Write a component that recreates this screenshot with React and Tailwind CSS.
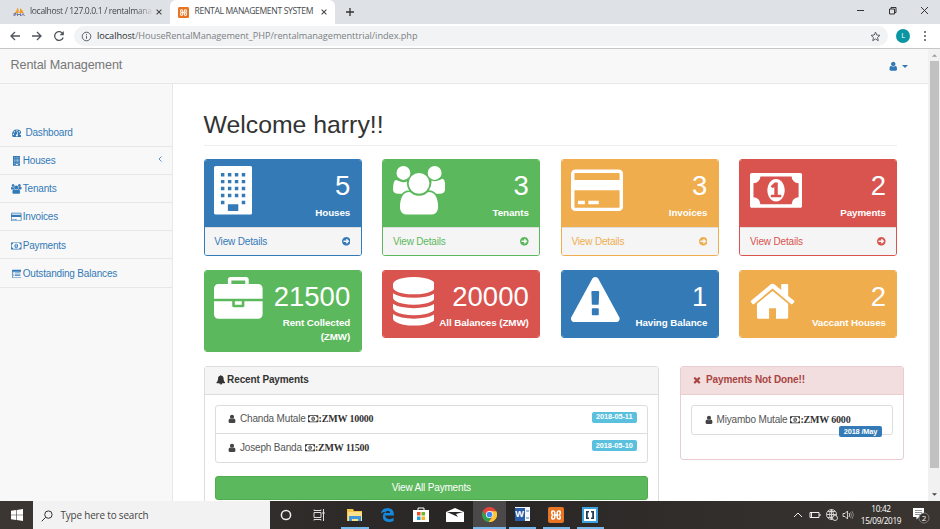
import React from 'react';

const ICONS = {
  user: ['0 0 1792 1792', 'M1536 1399q0 109-62.5 187t-150.5 78h-854q-88 0-150.5-78t-62.5-187q0-85 8.5-160.5t31.5-152 58.5-131 94-89 134.5-34.5q131 128 313 128t313-128q76 0 134.5 34.5t94 89 58.5 131 31.5 152 8.5 160.5zm-256-887q0 159-112.5 271.5t-271.5 112.5-271.5-112.5-112.5-271.5 112.5-271.5 271.5-112.5 271.5 112.5 112.5 271.5z'],
  users: ['-64 0 1920 1792', 'M529 896q-162 5-265 128h-134q-82 0-138-40.5t-56-118.5q0-353 124-353 6 0 43.5 21t97.5 42.5 119 21.5q67 0 133-23-5 37-5 66 0 159 93 294zm1071 637q0 120-73 189.5t-194 69.5h-874q-121 0-194-69.5t-73-189.5q0-53 3.5-103.5t14-109 26.5-108.5 43-97.5 62-81 85.5-53.5 111.5-20q10 0 43 21.5t73 48 107 48 135 21.5 135-21.5 107-48 73-48 43-21.5q61 0 111.5 20t85.5 53.5 62 81 43 97.5 26.5 108.5 14 109 3.5 103.5zm-1024-1277q0 106-75 181t-181 75-181-75-75-181 75-181 181-75 181 75 75 181zm704 384q0 159-112.5 271.5t-271.5 112.5-271.5-112.5-112.5-271.5 112.5-271.5 271.5-112.5 271.5 112.5 112.5 271.5zm576 225q0 78-56 118.5t-138 40.5h-134q-103-123-265-128 93-135 93-294 0-29-5-66 66 23 133 23 59 0 119-21.5t97.5-42.5 43.5-21q124 0 124 353zm-128-609q0 106-75 181t-181 75-181-75-75-181 75-181 181-75 181 75 75 181z'],
  home: ['64 0 1664 1792', 'M1472 992v480q0 26-19 45t-45 19h-384v-384h-256v384h-384q-26 0-45-19t-19-45v-480q0-1 .5-3t.5-3l575-474 575 474q1 2 1 6zm223-69l-62 74q-8 9-21 11h-3q-13 0-21-7l-692-577-692 577q-12 8-24 7-13-2-21-11l-62-74q-8-10-7-23.5t11-21.5l719-599q32-26 76-26t76 26l244 204v-195q0-14 9-23t23-9h192q14 0 23 9t9 23v408l219 182q10 8 11 21.5t-7 23.5z'],
  warning: ['0 0 1792 1792', 'M1024 1375v-190q0-14-9.5-23.5t-22.5-9.5h-192q-13 0-22.5 9.5t-9.5 23.5v190q0 14 9.5 23.5t22.5 9.5h192q13 0 22.5-9.5t9.5-23.5zm-2-374l18-459q0-12-10-19-13-11-24-11h-220q-11 0-24 11-10 7-10 21l17 457q0 10 10 16.5t24 6.5h185q14 0 23.5-6.5t10.5-16.5zm-14-934l768 1408q35 63-2 126-17 29-46.5 46t-63.5 17h-1536q-34 0-63.5-17t-46.5-46q-37-63-2-126l768-1408q17-31 47-49t65-18 65 18 47 49z'],
  briefcase: ['0 0 1792 1792', 'M640 256h512v-128h-512v128zm1152 640v480q0 66-47 113t-113 47h-1472q-66 0-113-47t-47-113v-480h672v160q0 26 19 45t45 19h320q26 0 45-19t19-45v-160h672zm-768 0v128h-256v-128h256zm768-480v384h-1792v-384q0-66 47-113t113-47h352v-160q0-40 28-68t68-28h576q40 0 68 28t28 68v160h352q66 0 113 47t47 113z'],
  database: ['128 0 1536 1792', 'M896 768q237 0 443-43t325-127v170q0 69-103 128t-280 93.5-385 34.5-385-34.5-280-93.5-103-128v-170q119 84 325 127t443 43zm0 768q237 0 443-43t325-127v170q0 69-103 128t-280 93.5-385 34.5-385-34.5-280-93.5-103-128v-170q119 84 325 127t443 43zm0-384q237 0 443-43t325-127v170q0 69-103 128t-280 93.5-385 34.5-385-34.5-280-93.5-103-128v-170q119 84 325 127t443 43zm0-1152q208 0 385 34.5t280 93.5 103 128v128q0 69-103 128t-280 93.5-385 34.5-385-34.5-280-93.5-103-128v-128q0-69 103-128t280-93.5 385-34.5z'],
  money: ['0 0 1920 1792', 'M768 1152h384v-96h-128v-448h-114l-148 137 77 80q42-37 55-57h2v288h-128v96zm512-256q0 70-21 142t-59.5 134-101.5 101-138 39-138-39-101.5-101-59.5-134-21-142 21-142 59.5-134 101.5-101 138-39 138 39 101.5 101 59.5 134 21 142zm512 256v-512q-106 0-181-75t-75-181h-1152q0 106-75 181t-181 75v512q106 0 181 75t75 181h1152q0-106 75-181t181-75zm128-832v1152q0 26-19 45t-45 19h-1792q-26 0-45-19t-19-45v-1152q0-26 19-45t45-19h1792q26 0 45 19t19 45z'],
  card: ['0 0 1920 1792', 'M1760 128q66 0 113 47t47 113v1216q0 66-47 113t-113 47h-1600q-66 0-113-47t-47-113v-1216q0-66 47-113t113-47h1600zm-1600 128q-13 0-22.5 9.5t-9.5 22.5v224h1664v-224q0-13-9.5-22.5t-22.5-9.5h-1600zm1600 1280q13 0 22.5-9.5t9.5-22.5v-608h-1664v608q0 13 9.5 22.5t22.5 9.5h1600zm-1504-128v-128h256v128h-256zm384 0v-128h384v128h-384z'],
  building: ['0 0 1408 1792', 'M64 0h1280q26 0 45 19t19 45v1664q0 26-19 45t-45 19h-1280q-26 0-45-19t-19-45v-1664q0-26 19-45t45-19zM256 256v128h128v-128zM512 256v128h128v-128zM768 256v128h128v-128zM1024 256v128h128v-128zM256 512v128h128v-128zM512 512v128h128v-128zM768 512v128h128v-128zM1024 512v128h128v-128zM256 768v128h128v-128zM512 768v128h128v-128zM768 768v128h128v-128zM1024 768v128h128v-128zM256 1024v128h128v-128zM512 1024v128h128v-128zM768 1024v128h128v-128zM1024 1024v128h128v-128zM256 1280v128h128v-128zM1024 1280v128h128v-128zM512 1408v256h384v-256z'],
  dashboard: ['0 0 1792 1792', 'M384 1152q0-53-37.5-90.5t-90.5-37.5-90.5 37.5-37.5 90.5 37.5 90.5 90.5 37.5 90.5-37.5 37.5-90.5zm192-448q0-53-37.5-90.5t-90.5-37.5-90.5 37.5-37.5 90.5 37.5 90.5 90.5 37.5 90.5-37.5 37.5-90.5zm428 481l101-382q6-26-7.5-48.5t-38.5-29.5-48 6.5-30 39.5l-101 382q-60 5-107 43.5t-63 98.5q-20 77 20 146t117 89 146-20 89-117q16-60-6-117t-72-91zm660-33q0-53-37.5-90.5t-90.5-37.5-90.5 37.5-37.5 90.5 37.5 90.5 90.5 37.5 90.5-37.5 37.5-90.5zm-640-640q0-53-37.5-90.5t-90.5-37.5-90.5 37.5-37.5 90.5 37.5 90.5 90.5 37.5 90.5-37.5 37.5-90.5zm448 192q0-53-37.5-90.5t-90.5-37.5-90.5 37.5-37.5 90.5 37.5 90.5 90.5 37.5 90.5-37.5 37.5-90.5zm320 448q0 261-141 483-19 29-54 29h-1402q-35 0-54-29-141-221-141-483 0-182 71-348t191-286 286-191 348-71 348 71 286 191 191 286 71 348z'],
  listAlt: ['0 0 1792 1792', 'M160 128h1472q66 0 113 47t47 113v1216q0 66-47 113t-113 47h-1472q-66 0-113-47t-47-113v-1216q0-66 47-113t113-47zM128 512v992q0 32 32 32h1472q32 0 32-32v-992zM256 640h128v128h-128zM512 640h1024v128h-1024zM256 896h128v128h-128zM512 896h1024v128h-1024zM256 1152h128v128h-128zM512 1152h1024v128h-1024z'],
  bell: ['0 0 1792 1792', 'M912 1696q0-16-16-16-59 0-101.5-42.5t-42.5-101.5q0-16-16-16t-16 16q0 73 51.5 124.5t124.5 51.5q16 0 16-16zm816-288q0 52-38 90t-90 38h-448q0 106-75 181t-181 75-181-75-75-181h-448q-52 0-90-38t-38-90q50-42 91-88t85-119.5 74.5-158.5 50-206 19.5-260q0-152 117-282.5t307-158.5q-8-19-8-39 0-40 28-68t68-28 68 28 28 68q0 20-8 39 190 28 307 158.5t117 282.5q0 139 19.5 260t50 206 74.5 158.5 85 119.5 91 88z'],
  times: ['0 0 1792 1792', 'M1490 1322q0 40-28 68l-136 136q-28 28-68 28t-68-28l-294-294-294 294q-28 28-68 28t-68-28l-136-136q-28-28-28-68t28-68l294-294-294-294q-28-28-28-68t28-68l136-136q28-28 68-28t68 28l294 294 294-294q28-28 68-28t68 28l136 136q28 28 28 68t-28 68l-294 294 294 294q28 28 28 68z'],
  arrow: ['128 128 1536 1536', 'M1413 896q0-27-18-45l-362-362q-18-18-45-18t-45 18l-91 91q-18 18-18 45t18 45l98 98h-502q-26 0-45 19t-19 45v128q0 26 19 45t45 19h502l-98 98q-19 19-19 45t19 45l91 91q18 18 45 18t45-18l362-362q18-18 18-45zm251 0q0 209-103 385.5t-279.5 279.5-385.5 103-385.5-103-279.5-279.5-103-385.5 103-385.5 279.5-279.5 385.5-103 385.5 103 279.5 279.5 103 385.5z'],
};

const NONZERO = ['users', 'home', 'database'];

function Icon({ name, className }) {
  const [viewBox, d] = ICONS[name];
  return (
    <svg viewBox={viewBox} fill="currentColor" className={`shrink-0 ${className}`}>
      <path d={d} fillRule={NONZERO.includes(name) ? 'nonzero' : 'evenodd'} />
    </svg>
  );
}

const MENU = [
  ['dashboard', 'Dashboard'],
  ['building', 'Houses'],
  ['users', 'Tenants'],
  ['card', 'Invoices'],
  ['money', 'Payments'],
  ['listAlt', 'Outstanding Balances'],
];

const BLUE = { bg: 'bg-[#337ab7]', border: 'border-[#337ab7]', text: 'text-[#337ab7]' };
const GREEN = { bg: 'bg-[#5cb85c]', border: 'border-[#5cb85c]', text: 'text-[#5cb85c]' };
const YELLOW = { bg: 'bg-[#f0ad4e]', border: 'border-[#f0ad4e]', text: 'text-[#f0ad4e]' };
const RED = { bg: 'bg-[#d9534f]', border: 'border-[#d9534f]', text: 'text-[#d9534f]' };

const TOP_CARDS = [
  ['building', 5, 'Houses', BLUE],
  ['users', 3, 'Tenants', GREEN],
  ['card', 3, 'Invoices', YELLOW],
  ['money', 2, 'Payments', RED],
];
const BOTTOM_CARDS = [
  ['briefcase', 21500, 'Rent Collected (ZMW)', GREEN],
  ['database', 20000, 'All Balances (ZMW)', RED],
  ['warning', 1, 'Having Balance', BLUE],
  ['home', 2, 'Vaccant Houses', YELLOW],
];

function Card({ icon, value, label, color, footer }) {
  return (
    <div className={`overflow-hidden rounded-[3px] border ${color.border}`}>
      <div className={`flex justify-between pr-[10.5px] pl-[9.5px] pt-[6.4px] pb-[7.5px] text-white ${color.bg}`}>
        <Icon name={icon} className="h-[48.6px] w-auto" />
        <div className={`text-right ${icon === 'briefcase' ? 'w-[82px]' : '-ml-2'}`}>
          <div className="text-[27.5px] leading-[39.3px]">{value}</div>
          <div className={`text-[9.8px] font-bold tracking-[-0.08px] leading-[13.75px] ${icon === 'briefcase' ? '' : 'whitespace-nowrap'}`}>{label}</div>
        </div>
      </div>
      {footer && (
        <div className={`flex h-[28.3px] items-center justify-between border-t border-[#ddd] bg-[#f5f5f5] pr-[10.5px] pl-[9.8px] text-[10px] tracking-[-0.17px] ${color.text}`}>
          <span>View Details</span>
          <Icon name="arrow" className="size-[8.6px]" />
        </div>
      )}
    </div>
  );
}

function Person({ name, amount, children }) {
  return (
    <div className="flex h-full items-center pl-[10px] text-[#555]">
      <Icon name="user" className="mr-[3px] ml-[1.5px] h-[9.6px] w-[10px] text-[#444]" />
      <span className="whitespace-nowrap">{name}</span>
      <Icon name="money" className="ml-[2.7px] h-[9.6px] w-[10.3px] text-[#333]" />
      <span className="whitespace-nowrap font-['Liberation_Serif',serif] text-[10px] font-bold tracking-[-0.2px] text-[#333]">:ZMW {amount}</span>
      {children}
    </div>
  );
}

function Browser() {
  return (
    <header className="font-['Open_Sans',sans-serif]">
      <div className="flex h-[24px] items-center bg-[#dee1e6] text-[#45494d]">
        <div className="flex h-full w-[170px] items-center pl-[13px]">
          <svg viewBox="0 0 24 20" className="h-[10px] w-[12px] shrink-0">
            <path d="M3 12Q8 8 9 1q4 5 2 11zM12 12q3-5 2-10 6 5 7 10z" fill="#f39a22" />
            <path d="M2 18v-5h4v3H2m7 2v-5l3 3 3-3v5m2 0 3-5 3 5" fill="none" stroke="#69699b" strokeWidth="1.7" />
          </svg>
          <div className="ml-[5px] w-[124px] shrink-0 whitespace-nowrap text-[8.6px] tracking-[-0.36px] [mask-image:linear-gradient(to_right,black_85%,transparent)]">localhost / 127.0.0.1 / rentalmana</div>
          <svg viewBox="0 0 10 10" className="ml-[1px] size-[8px] shrink-0"><path d="m2 2 6 6m0-6L2 8" stroke="#444" strokeWidth="1.3" /></svg>
        </div>
        <div className="flex h-full w-[165px] items-center rounded-t-[6px] bg-white pl-[8px]">
          <XamppIcon className="size-[11px]" />
          <span className="ml-[5.5px] w-[125px] whitespace-nowrap text-[8.6px] tracking-[-0.35px]">RENTAL MANAGEMENT SYSTEM</span>
          <svg viewBox="0 0 10 10" className="ml-[0.5px] size-[8px] shrink-0"><path d="m2 2 6 6m0-6L2 8" stroke="#444" strokeWidth="1.3" /></svg>
        </div>
        <svg viewBox="0 0 10 10" className="ml-[10px] size-[10px]"><path d="M5 1v8M1 5h8" stroke="#333" strokeWidth="1.3" /></svg>
        <div className="mr-[11px] ml-auto flex items-center gap-[23px] pb-[4px] text-[#333]">
          <svg viewBox="0 0 9 9" className="size-[9px]"><path d="M1 4.500h7" stroke="currentColor" /></svg>
          <svg viewBox="0 0 9 9" className="size-[9px]"><path d="M1.5 3h5v5h-5zM3 3V1.5h5V6.5H6.5" fill="none" stroke="currentColor" /></svg>
          <svg viewBox="0 0 9 9" className="size-[9px]"><path d="m1 1 7 7m0-7L1 8" stroke="currentColor" /></svg>
        </div>
      </div>
      <div className="flex h-[25px] items-center border-b border-[#c5c7c9] bg-white text-[#50545a]">
        <svg viewBox="0 0 12 12" className="ml-[9px] size-[12px]"><path d="M11 6H2m4-4L2 6l4 4" fill="none" stroke="currentColor" strokeWidth="1.3" /></svg>
        <svg viewBox="0 0 12 12" className="ml-[10px] size-[12px]"><path d="M1 6h9M6 2l4 4-4 4" fill="none" stroke="currentColor" strokeWidth="1.3" /></svg>
        <svg viewBox="0 0 12 12" className="ml-[10px] size-[12px]"><path d="M10 4A4.4 4.4 0 1 0 10.2 7.5" fill="none" stroke="currentColor" strokeWidth="1.3" /><path d="M10.8 1v4.2H6.6z" fill="currentColor" /></svg>
        <div className="ml-[9px] flex h-[20px] w-[814px] items-center rounded-full bg-[#f1f3f4] pr-[7px] pl-[7px]">
          <svg viewBox="0 0 12 12" className="size-[11px]" fill="none" stroke="currentColor"><circle cx="6" cy="6" r="4.7" /><path d="M6 5.2v3.3M6 3.2v1" /></svg>
          <span className="ml-[5px] whitespace-nowrap text-[9.2px] tracking-[-0.05px] text-[#7b7f84]"><span className="text-[#2b2e31]">localhost</span>/HouseRentalManagement_PHP/rentalmanagementtrial/index.php</span>
          <svg viewBox="0 0 12 12" className="ml-auto size-[11px]"><path d="m6 1.2 1.4 3.2 3.5.3-2.7 2.4.8 3.5-3-1.9-3 1.9.8-3.5L1.1 4.7l3.5-.3z" fill="none" stroke="currentColor" /></svg>
        </div>
        <div className="ml-[8px] flex size-[14px] items-center justify-center rounded-full bg-[#0b96a3] text-[7.5px] text-white">L</div>
        <svg viewBox="0 0 4 12" className="ml-[13px] h-[12px] w-[4px]" fill="currentColor"><circle cx="2" cy="2" r="1" /><circle cx="2" cy="6" r="1" /><circle cx="2" cy="10" r="1" /></svg>
      </div>
    </header>
  );
}

function XamppIcon({ className }) {
  return (
    <svg viewBox="0 0 16 16" className={`shrink-0 ${className}`}>
      <rect width="16" height="16" rx="2" fill="#e87524" />
      <path d="M4 4.200C6 3.500 6.800 4.500 6.800 6v4c0 1.500-.8 2.500-2.800 1.800C3.300 10 3.500 9 5 8 3.500 7 3.300 6 4 4.200ZM12 4.200C10 3.500 9.200 4.500 9.200 6v4c0 1.500.8 2.500 2.800 1.800C12.700 10 12.500 9 11 8 12.500 7 12.700 6 12 4.200ZM6.800 8h2.400" fill="none" stroke="#fff" strokeWidth="1.500" strokeLinejoin="round" />
    </svg>
  );
}

function Slot({ className, open, children }) {
  return (
    <div className={`flex h-full shrink-0 items-center justify-center border-b-2 ${open ? 'border-[#76b9ed]' : 'border-transparent'} ${className}`}>
      {children}
    </div>
  );
}

function Taskbar() {
  return (
    <footer className="flex h-[28px] bg-linear-to-r from-[#3b3632] via-[#282625] to-[#3a3531] font-['Open_Sans',sans-serif] text-white">
      <div className="flex w-[33px] items-center justify-center">
        <svg viewBox="0 0 12 12" className="size-[12px]" fill="#fff"><path d="M0 1.700 5.200 1v4.700H0zM5.800.9 12 0v5.700H5.800zM0 6.300h5.200V11L0 10.300zM5.800 6.300H12V12l-6.200-.9z" /></svg>
      </div>
      <div className="flex w-[236.500px] items-center bg-[#f2f2f2] pt-[1px] pl-[8px] text-[#444]">
        <svg viewBox="0 0 12 12" className="size-[12px]" fill="none" stroke="#333"><circle cx="7.400" cy="4.600" r="3.700" /><path d="M4.700 7.300.7 11.300" /></svg>
        <span className="ml-[7.500px] text-[9.900px] tracking-[-0.150px]">Type here to search</span>
      </div>
      <Slot className="w-[33px] pt-[2px]"><svg viewBox="0 0 12 12" className="size-[12px]"><circle cx="6" cy="6" r="4.600" fill="none" stroke="#eee" strokeWidth="1.500" /></svg></Slot>
      <Slot className="w-[33px] pt-[2px]">
        <svg viewBox="0 0 12 12" className="size-[12px]" fill="none" stroke="#ddd"><path d="M1 3.500h7v5H1zM1 .5v1h7v-1M1 11.500v-1h7v1M10.500 0v12" /><path d="M9.500 4h2" strokeWidth="2" /></svg>
      </Slot>
      <Slot className="ml-[5px] w-[28px] pt-[1px]" open>
        <svg viewBox="0 0 16 14" className="h-[14px] w-[16px]"><path d="M0 1h6l1 2h8v10H0z" fill="#f5c64b" /><path d="M1 4h14v9H1z" fill="#ffe08a" /><path d="M2 8h12v5H11v-2H5v2H2z" fill="#3c97dc" /></svg>
      </Slot>
      <Slot className="ml-[3px] w-[32px] pt-[1px]">
        <svg viewBox="0 0 16 16" className="size-[15px]"><path d="M1 7Q2 1 8.500 1 15 1.500 15 9H5.500q.5 4 5 4 2 0 4-1.200v3Q12 16 9.500 16 3 15.500 3 10q0-3 3-5Q3 5 1 7m4.700-.5h5.100Q10.500 4 8.500 4 6.500 4 5.700 6.500" fill="#1688dd" fillRule="evenodd" /></svg>
      </Slot>
      <Slot className="w-[34px]">
        <svg viewBox="0 0 16 16" className="size-[16px]"><path d="M5 5V2h6v3" fill="none" stroke="#fff" /><path d="M0 4h16v12H0z" fill="#fff" /><path d="M4 6h3.500v3.500H4z" fill="#ee4d2d" /><path d="M8.500 6H12v3.500H8.500z" fill="#71b62c" /><path d="M4 10.500h3.500V14H4z" fill="#209fe0" /><path d="M8.500 10.500H12V14H8.500z" fill="#f4b51b" /></svg>
      </Slot>
      <Slot className="w-[34px] pt-[1px]">
        <svg viewBox="0 0 18 14" className="h-[14px] w-[18px]"><path d="M0 4 9 0l9 4v10H0z" fill="#fff" /><path d="m1 4 11 5-2-3 7-2z" fill="#2b2928" /></svg>
      </Slot>
      <Slot className="ml-px w-[33px] bg-[#4b4949] pt-[1px]" open>
        <svg viewBox="0 0 16 16" className="size-[15px]"><circle cx="8" cy="8" r="8" fill="#e8453c" /><path d="M1 4.200 5 10l5 1-3 5Q1 15 .1 9 0 6 1 4.200" fill="#2ba24c" /><path d="M8 4.500h7.200A8 8 0 0 1 7 16l4.500-6z" fill="#fcc934" /><circle cx="8" cy="8" r="3.800" fill="#fff" /><circle cx="8" cy="8" r="3" fill="#4285f4" /></svg>
      </Slot>
      <Slot className="ml-[3px] w-[27px]" open>
        <div className="flex h-[14px] w-[15px] items-center bg-[#f5f9fd]"><div className="flex h-[13px] w-[10px] items-center justify-center bg-[#2a5caa] text-[9px] font-bold">W</div><div className="ml-px h-[9px] w-[3px] border-y-2 border-[#9bb8df]" /></div>
      </Slot>
      <Slot className="ml-[7px] w-[27px] pt-[1px]" open><XamppIcon className="size-[16px]" /></Slot>
      <Slot className="ml-[7px] w-[27px] pt-[1px]" open>
        <svg viewBox="0 0 16 16" className="size-[16px]"><path d="M0 0h16v16H0z" fill="#3ca1dc" /><path d="M2 2h12v12H2z" fill="#fff" /><path d="M7 4H4v8h3v-1.500H5.800v-5H7zM9 4h3v8H9v-1.500h1.200v-5H9z" fill="#223a55" /></svg>
      </Slot>
      <div className="ml-auto flex items-center pr-[10px]">
        <svg viewBox="0 0 10 10" className="size-[10px]" fill="none" stroke="#eee"><path d="m1 7 4-4 4 4" /></svg>
        <svg viewBox="0 0 12 10" className="ml-[6px] h-[10px] w-[12px]" fill="none" stroke="#eee"><path d="M1 2.500h9v5H1zM11 4v2" /><path d="M2.500 3v4" /></svg>
        <svg viewBox="0 0 12 12" className="ml-[5px] size-[12px]" fill="none" stroke="#ddd" strokeWidth=".9"><circle cx="5.500" cy="5.500" r="5" /><path d="M.5 5.500h10M5.500.5v10M2 2.500h7M2 8.500h7M5.500.5q-4 5 0 10 4-5 0-10" /><circle cx="9" cy="9" r="2.500" fill="#393531" /></svg>
        <svg viewBox="0 0 12 12" className="ml-[4px] size-[12px]" fill="none" stroke="#ddd" strokeWidth=".9"><path d="M1 4.500h2l2.500-2.500v8L3 7.500H1zM7 4q1.500 2 0 4" /><path d="M8.500 3q2 3 0 6M10 2q3 4 0 8" stroke="#8b8784" /></svg>
        <div className="ml-[6px] flex w-[42px] flex-col items-center text-[8.2px] leading-[12px] whitespace-nowrap tracking-[-0.32px]"><span>10:42</span><span>15/09/2019</span></div>
        <svg viewBox="0 0 18 18" className="ml-[10px] size-[18px]"><path d="M1 2h11v9H7l-2.500 2.500V11H1z" fill="#fff" /><path d="M3 4.500h7M3 6.500h7M3 8.500h5" stroke="#777" strokeWidth=".8" /><circle cx="12" cy="12" r="5" fill="#35312e" stroke="#999" strokeWidth=".7" /><text x="12" y="15" fontSize="8" fill="#fff" textAnchor="middle">2</text></svg>
      </div>
    </footer>
  );
}

function Badge({ children }) {
  return <span className="mr-[10px] mb-[4px] ml-auto flex h-[11px] w-[45.500px] items-center justify-center rounded-[2px] bg-[#5bc0de] text-[7.400px] font-bold tracking-[-0.100px] text-white">{children}</span>;
}

export default function App() {
  return (
    <div className="flex h-[529px] w-[940px] flex-col overflow-hidden bg-white font-['Liberation_Sans',Arial,sans-serif] text-[10px] leading-[13.75px] tracking-[-0.17px] text-[#333]">
      <Browser />
      <div className="flex h-[452px] shrink-0 overflow-hidden">
        <div className="flex min-w-0 flex-1 flex-col">
          <nav className="flex h-[35px] shrink-0 items-center justify-between border-b border-[#e7e7e7] bg-[#f8f8f8] pr-[20px] pl-[10.500px]">
            <span className="text-[12.600px] tracking-[-0.100px] text-[#777]">Rental Management</span>
            <span className="flex items-center text-[#337ab7]">
              <Icon name="user" className="size-[10.500px]" />
              <svg viewBox="0 0 6 3" className="ml-[4px] h-[3px] w-[6px]"><path d="M0 0h6L3 3z" fill="currentColor" /></svg>
            </span>
          </nav>
          <div className="flex min-h-0 flex-1">
            <aside className="w-[173px] shrink-0 border-r border-[#e7e7e7] bg-[#f8f8f8] pt-[34.500px]">
              {MENU.map(([icon, label]) => (
                <div key={label} className="flex h-[28.200px] items-center border-b border-[#e7e7e7] pt-[1.200px] pl-[10.300px] text-[#337ab7]">
                  <span className="flex w-[12.400px] justify-center"><Icon name={icon} className="h-[9.800px] w-auto" /></span>
                  <span className={icon === 'dashboard' ? 'ml-[2.700px]' : ''}>{label}</span>
                  {icon === 'building' && <svg viewBox="0 0 4 6" className="mr-[10px] mb-[4px] ml-auto h-[6px] w-[4px]"><path d="M3.500.5 1 3l2.500 2.500" fill="none" stroke="currentColor" strokeWidth=".8" /></svg>}
                </div>
              ))}
            </aside>
            <main className="flex-1 overflow-hidden pl-[30.500px]">
              <h1 className="mt-[27px] h-[34.500px] w-[693.500px] border-b border-[#eee] text-[24.800px] leading-[28px] tracking-normal text-[#333]">Welcome harry!!</h1>
              <div className="mt-[13.500px] grid grid-cols-[repeat(4,158.200px)] items-start gap-x-[20.400px] gap-y-[13.300px] tracking-normal">
                {TOP_CARDS.map(([icon, value, label, color]) => <Card key={icon} icon={icon} value={value} label={label} color={color} footer />)}
                {BOTTOM_CARDS.map(([icon, value, label, color]) => <Card key={icon} icon={icon} value={value} label={label} color={color} />)}
              </div>
              <div className="mt-[13.500px] flex items-start gap-[21px]">
                <section className="h-[160px] w-[455.500px] rounded-[3px] border border-[#ddd]">
                  <h2 className="flex h-[28px] items-center border-b border-[#ddd] bg-[#f5f5f5] pl-[11px] font-bold tracking-[-0.120px]"><Icon name="bell" className="mr-[2px] size-[9.600px]" />Recent Payments</h2>
                  <div className="p-[10px]">
                    <div className="rounded-[3px] border border-[#ddd]">
                      <div className="h-[28px] border-b border-[#ddd]"><Person name="Chanda Mutale" amount="10000"><Badge>2018-05-11</Badge></Person></div>
                      <div className="h-[28px]"><Person name="Joseph Banda" amount="11500"><Badge>2018-05-10</Badge></Person></div>
                    </div>
                    <button className="mt-[13px] h-[24px] w-full rounded-[3px] border border-[#4cae4c] bg-[#5cb85c] text-white">View All Payments</button>
                  </div>
                </section>
                <section className="h-[94px] w-[224px] rounded-[3px] border border-[#ebccd1]">
                  <h2 className="flex h-[28px] items-center border-b border-[#ebccd1] bg-[#f2dede] pl-[11px] font-bold tracking-[-0.120px] text-[#a94442]"><Icon name="times" className="mr-[4px] size-[10px]" />Payments Not Done!!</h2>
                  <div className="p-[10px]">
                    <div className="relative h-[30px] rounded-[3px] border border-[#ddd]">
                      <Person name="Miyambo Mutale" amount="6000" />
                      <span className="absolute top-[20.500px] right-[10px] flex h-[11px] w-[43px] items-center justify-center rounded-[2px] bg-[#337ab7] text-[7.400px] font-bold whitespace-nowrap text-white">2018 /May</span>
                    </div>
                  </div>
                </section>
              </div>
            </main>
          </div>
        </div>
        <div className="flex w-[12px] flex-col items-center bg-[#f1f1f1]">
          <svg viewBox="0 0 6 3" className="mt-[5px] h-[3px] w-[5px]"><path d="M0 3h6L3 0z" fill="#999" /></svg>
          <div className="mt-[4px] h-[407px] w-[9px] bg-[#c1c1c1]" />
          <svg viewBox="0 0 6 3" className="mt-auto mb-[5px] h-[3px] w-[5px]"><path d="M0 0h6L3 3z" fill="#444" /></svg>
        </div>
      </div>
      <Taskbar />
    </div>
  );
}
